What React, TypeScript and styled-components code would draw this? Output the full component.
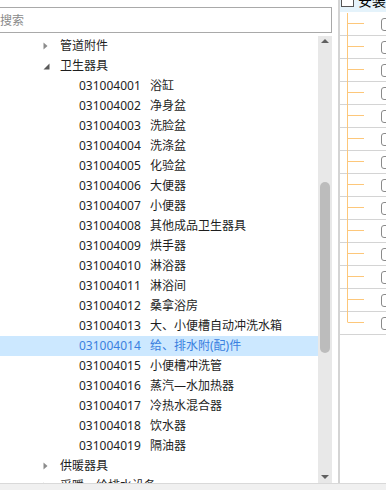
import React from "react";
import styled, { createGlobalStyle } from "styled-components";

const Global = createGlobalStyle`
  html, body { margin: 0; padding: 0; background: #fff; overflow: hidden; }
  body { font-family: "Noto Sans", "Noto Sans CJK SC", sans-serif; }
  * { box-sizing: border-box; }
`;

const Page = styled.div`
  width: 386px;
  height: 490px;
  display: flex;
  flex-direction: column;
  overflow: hidden;
  background: #fff;
`;

const Main = styled.div`
  height: 483px;
  display: flex;
  flex-direction: row;
  overflow: hidden;
`;

const LeftPanel = styled.div`
  width: 332px;
  display: flex;
  flex-direction: column;
  overflow: visible;
`;

const SearchBox = styled.input`
  margin: 7px 0 3px -6px;
  width: 338px;
  height: 26px;
  border: 1px solid #a9a9a9;
  padding: 0 0 0 5px;
  font-family: "Noto Sans", "Noto Sans CJK SC", sans-serif;
  font-size: 12px;
  color: #222;
  outline: none;
  background: #fff;
  &::placeholder { color: #8a8a8a; }
`;

const TreeArea = styled.div`
  flex: 1;
  display: flex;
  flex-direction: row;
  overflow: hidden;
`;

const TreeList = styled.div`
  flex: 1;
  overflow: hidden;
  display: flex;
  flex-direction: column;
`;

const TreeRow = styled.div<{ $selected?: boolean; $level: number }>`
  height: 20px;
  flex-shrink: 0;
  display: flex;
  align-items: center;
  padding-left: ${(p) => (p.$level === 1 ? 43 : 79)}px;
  font-size: 12px;
  line-height: 20px;
  white-space: nowrap;
  color: ${(p) => (p.$selected ? "#3a80e0" : "#1e1e1e")};
  background: ${(p) => (p.$selected ? "#cce8ff" : "transparent")};
`;

const Toggle = styled.span`
  width: 17px;
  height: 20px;
  display: flex;
  align-items: center;
`;

const Code = styled.span`
  display: inline-block;
  width: 71px;
`;

const Scrollbar = styled.div`
  width: 14px;
  background: #e8e8e8;
  display: flex;
  flex-direction: column;
  align-items: center;
`;

const Arrow = styled.svg<{ $top?: boolean }>`
  display: block;
  margin-top: ${(p) => (p.$top ? 3 : 0)}px;
  margin-bottom: ${(p) => (p.$top ? 0 : 4)}px;
`;

const Thumb = styled.div<{ $offset: number; $size: number }>`
  width: 10px;
  height: ${(p) => p.$size}px;
  margin-top: ${(p) => p.$offset}px;
  border-radius: 5px;
  background: #bcbcbc;
`;

const Spacer = styled.div`
  flex: 1;
`;

const Gutter = styled.div`
  width: 6px;
`;

const Divider = styled.div`
  width: 2px;
  background: #d4d4d4;
`;

const RightPanel = styled.div`
  flex: 1;
  margin-top: -12px;
  display: flex;
  flex-direction: column;
  overflow: hidden;
`;

const Header = styled.div`
  height: 25px;
  flex-shrink: 0;
  display: flex;
  align-items: center;
  gap: 4px;
  padding-left: 1px;
  background: #e5f3fb;
  border-bottom: 1px solid #fff;
  white-space: nowrap;
  font-size: 14px;
  color: #000;
`;

const HeaderBox = styled.span`
  width: 13px;
  height: 13px;
  flex-shrink: 0;
  border: 1px solid #555;
  background: #fff;
`;

const GridRow = styled.div`
  height: 23px;
  flex-shrink: 0;
  display: flex;
  align-items: center;
  border-bottom: 1px solid #d4d4d4;
`;

const Connector = styled.svg`
  display: block;
  flex-shrink: 0;
  overflow: visible;
  align-self: flex-start;
`;

const RowCheck = styled.span`
  width: 13px;
  height: 13px;
  flex-shrink: 0;
  margin-left: 13px;
  border: 1px solid #8a8a8a;
  border-radius: 3px;
  background: #fff;
`;

const BottomBar = styled.div`
  flex: 1;
  background: #f0f0f0;
  border-top: 1px solid #d9d9d9;
`;

type Node = { label: string; code?: string; level: 1 | 2; state?: "open" | "closed"; selected?: boolean };

const items: [string, string][] = [
  ["031004001", "浴缸"],
  ["031004002", "净身盆"],
  ["031004003", "洗脸盆"],
  ["031004004", "洗涤盆"],
  ["031004005", "化验盆"],
  ["031004006", "大便器"],
  ["031004007", "小便器"],
  ["031004008", "其他成品卫生器具"],
  ["031004009", "烘手器"],
  ["031004010", "淋浴器"],
  ["031004011", "淋浴间"],
  ["031004012", "桑拿浴房"],
  ["031004013", "大、小便槽自动冲洗水箱"],
  ["031004014", "给、排水附(配)件"],
  ["031004015", "小便槽冲洗管"],
  ["031004016", "蒸汽—水加热器"],
  ["031004017", "冷热水混合器"],
  ["031004018", "饮水器"],
  ["031004019", "隔油器"],
];

const nodes: Node[] = [
  { label: "管道附件", level: 1, state: "closed" },
  { label: "卫生器具", level: 1, state: "open" },
  ...items.map(([code, label]) => ({ code, label, level: 2 as const, selected: code === "031004014" })),
  { label: "供暖器具", level: 1, state: "closed" },
  { label: "采暖、给排水设备", level: 1, state: "closed" },
];

const ToggleIcon = ({ open }: { open: boolean }) =>
  open ? (
    <svg width="7" height="7" viewBox="0 0 7 7">
      <polygon points="6.5,0.5 6.5,6.5 0.5,6.5" fill="#5a5a5a" />
    </svg>
  ) : (
    <svg width="5" height="8" viewBox="0 0 5 8">
      <polygon points="0.5,0.5 4.5,4 0.5,7.5" fill="#8c8c8c" />
    </svg>
  );

const ROWS = 14;

export default function App() {
  return (
    <Page>
      <Global />
      <Main>
        <LeftPanel>
          <SearchBox placeholder="搜索" />
          <TreeArea>
            <TreeList>
              {nodes.map((n, i) => (
                <TreeRow key={i} $level={n.level} $selected={n.selected}>
                  {n.level === 1 ? (
                    <>
                      <Toggle>
                        <ToggleIcon open={n.state === "open"} />
                      </Toggle>
                      <span>{n.label}</span>
                    </>
                  ) : (
                    <>
                      <Code>{n.code}</Code>
                      <span>{n.label}</span>
                    </>
                  )}
                </TreeRow>
              ))}
            </TreeList>
            <Scrollbar>
              <Arrow $top width="8" height="4" viewBox="0 0 8 4">
                <polygon points="0,4 4,0 8,4" fill="#606060" />
              </Arrow>
              <Thumb $offset={139} $size={171} />
              <Spacer />
              <Arrow width="8" height="4" viewBox="0 0 8 4">
                <polygon points="0,0 8,0 4,4" fill="#606060" />
              </Arrow>
            </Scrollbar>
          </TreeArea>
        </LeftPanel>
        <Gutter />
        <Divider />
        <RightPanel>
          <Header>
            <HeaderBox />
            <span>安装</span>
          </Header>
          {Array.from({ length: ROWS }).map((_, i) => (
            <GridRow key={i}>
              <Connector width="28" height="22" viewBox="0 0 28 22">
                <line
                  x1="7.5"
                  y1="0"
                  x2="7.5"
                  y2={i === ROWS - 1 ? 10.5 : 23}
                  stroke="#fdc77a"
                  strokeWidth="1"
                />
                <line x1="8" y1="10.5" x2="24" y2="10.5" stroke="#fdc77a" strokeWidth="1" />
              </Connector>
              <RowCheck />
            </GridRow>
          ))}
        </RightPanel>
      </Main>
      <BottomBar />
    </Page>
  );
}
